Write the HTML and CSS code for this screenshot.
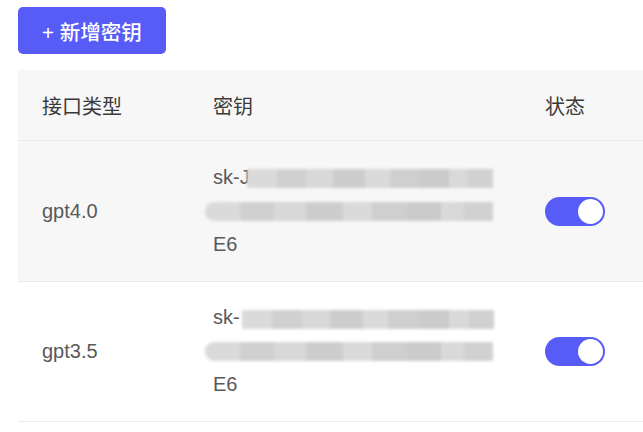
FILE: index.html
```html
<!DOCTYPE html>
<html lang="zh-CN">
<head>
    <meta charset="UTF-8">
    <meta name="viewport" content="width=device-width, initial-scale=1.0">
    <title>密钥管理</title>
    <link rel="stylesheet" href="styles.css">
</head>
<body>
    <div class="page">
        <button class="add-btn">+ 新增密钥</button>

        <table class="key-table">
            <thead>
                <tr>
                    <th class="col-type">接口类型</th>
                    <th class="col-key">密钥</th>
                    <th>状态</th>
                </tr>
            </thead>
            <tbody>
                <tr class="row-hover">
                    <td>gpt4.0</td>
                    <td>
                        <div class="key">
                            <div class="key-line">sk-J<span class="mask mask-first"></span></div>
                            <div class="key-line"><span class="mask mask-full"></span></div>
                            <div class="key-line">E6</div>
                        </div>
                    </td>
                    <td><span class="switch on"><span class="knob"></span></span></td>
                </tr>
                <tr class="row-last">
                    <td>gpt3.5</td>
                    <td>
                        <div class="key">
                            <div class="key-line">sk-<span class="mask mask-first wide"></span></div>
                            <div class="key-line"><span class="mask mask-full"></span></div>
                            <div class="key-line">E6</div>
                        </div>
                    </td>
                    <td><span class="switch on"><span class="knob"></span></span></td>
                </tr>
            </tbody>
        </table>
    </div>
</body>
</html>
```

FILE: styles.css
```css
body {
    margin: 0;
    background: #fff;
    font-family: "Liberation Sans", "Noto Sans CJK SC", sans-serif;
    font-size: 20px;
    color: #555;
    overflow: hidden;
}
.page {
    padding: 7px 0 0 18px;
}
.add-btn {
    display: block;
    width: 148px;
    height: 47px;
    padding: 0 0 0 24px;
    text-align: left;
    border: none;
    border-radius: 5px;
    background-color: #585cf6;
    color: #fff;
    font-family: inherit;
    font-size: 20.5px;
    font-weight: 500;
    cursor: pointer;
}
.key-table {
    margin-top: 16px;
    width: 625px;
    border-collapse: collapse;
    table-layout: fixed;
}
.key-table th,
.key-table td {
    padding: 0 24px;
    text-align: left;
    vertical-align: middle;
    border-bottom: 1px solid #ebebeb;
}
.key-table th {
    height: 70px;
    background-color: #f7f7f7;
    font-weight: normal;
    color: #3a3a3a;
}
.key-table td {
    height: 140px;
    color: #595959;
}
.row-last td {
    height: 139px;
}
.row-hover td {
    background-color: #f7f7f7;
}
.col-type { width: 123px; }
.col-key { width: 284px; }
.key {
    width: 284px;
    line-height: 33.5px;
}
.key-line {
    display: flex;
    align-items: center;
    height: 33.5px;
}
/* privacy blur over the middle of the key */
.mask {
    display: block;
    height: 19px;
    filter: blur(1.8px);
    background-image: linear-gradient(90deg,
        #dadada 0 12%, #d0d0d0 12% 24%, #d8d8d8 24% 35%, #cdcdcd 35% 48%,
        #dadada 48% 58%, #cfcfcf 58% 70%, #cbcbcb 70% 82%, #d9d9d9 82% 90%, #d1d1d1 90% 100%);
}
.mask-first {
    width: 246px;
    margin-left: -3px;
    margin-top: 2px;
}
.mask-first.wide {
    width: 252px;
    margin-left: 2px;
}
.mask-full {
    width: 288px;
    margin-left: -8px;
    border-radius: 9px 0 0 9px;
}
.switch {
    display: flex;
    align-items: center;
    justify-content: flex-end;
    width: 60px;
    height: 29px;
    padding: 0 2px;
    box-sizing: border-box;
    border-radius: 15px;
    background-color: #585cf6;
}
.knob {
    width: 25px;
    height: 25px;
    border-radius: 50%;
    background-color: #fff;
}
```
